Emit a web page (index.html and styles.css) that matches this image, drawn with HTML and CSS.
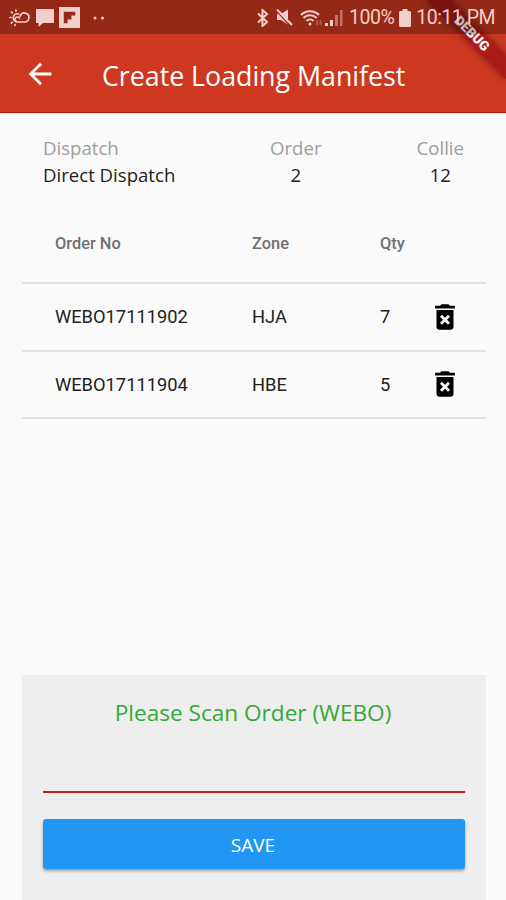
FILE: index.html
```html
<!DOCTYPE html>
<html lang="en">
<head>
    <meta charset="UTF-8">
    <meta name="viewport" content="width=device-width, initial-scale=1.0">
    <title>Create Loading Manifest</title>
    <link rel="stylesheet" href="styles.css">
</head>
<body>
    <header class="app-bar">
        <svg class="back" viewBox="0 0 24 24" fill="currentColor">
            <path d="M20 11H7.830l5.590-5.590L12 4l-8 8 8 8 1.410-1.410L7.830 13H20v-2z"/>
        </svg>
        <h1>Create Loading Manifest</h1>
    </header>

    <div class="debug-banner">DEBUG</div>

    <div class="status-bar">
        <div class="notifications">
            <svg class="icon-weather" width="21" height="18" viewBox="0 0 21 18" fill="none" stroke="currentColor" stroke-width="1.7" stroke-linecap="round">
                <path d="M9.500 5A4 4 0 1 0 7 12.600M7 1v1M2.500 3l.8.8M.9 8.500h1M2.300 14l.9-.8M6 16.500v-1"/>
                <path d="M8.500 13h7a4.500 4.500 0 1 0-4.300-6M8.500 13a2.500 2.500 0 1 1 2-4"/>
            </svg>
            <svg class="icon-chat" width="18" height="18" viewBox="0 0 18 18" fill="currentColor">
                <path d="M0 0h18v14H7l-4.500 4V14H0z"/>
            </svg>
            <svg class="icon-board" width="21" height="21" viewBox="0 0 22 22">
                <path d="M0 0h22v22H0z" fill="currentColor"/>
                <path d="M5 5h12v4h-4v4H9v4H5z" fill="#952a1a"/>
            </svg>
            <svg class="icon-more" width="12" height="4" viewBox="0 0 12 4" fill="currentColor">
                <circle cx="2" cy="2" r="1.500"/>
                <circle cx="9.500" cy="2" r="1.500"/>
            </svg>
        </div>
        <div class="system">
            <svg class="icon-bluetooth" width="12" height="18" viewBox="0 0 12 18" fill="none" stroke="currentColor" stroke-width="2">
                <path d="M1 4.500l9 8.500-4.500 4V1L10 5l-9 8.500"/>
            </svg>
            <svg class="icon-mute" width="17" height="17" viewBox="0 0 17 17">
                <path d="M1 5h4l7-4.500v15L5 11H1z" fill="currentColor"/>
                <path d="M0 1.500L14.500 17" stroke="#952a1a" stroke-width="1.500"/>
                <path d="M1 .5L16 16" stroke="currentColor" stroke-width="2"/>
            </svg>
            <svg class="icon-wifi" width="23" height="18" viewBox="0 0 23 18" fill="none" stroke="currentColor" stroke-width="2">
                <path d="M1 6a12.500 12.500 0 0 1 18 0M3.500 9a9 9 0 0 1 13 0M6.500 12a5 5 0 0 1 7 0"/>
                <circle cx="10" cy="15" r="1.500" fill="currentColor" stroke="none"/>
                <path d="M17 11v5M20.500 11v5" stroke-opacity=".3"/>
            </svg>
            <svg class="icon-signal" width="18" height="18" viewBox="0 0 18 18" fill="currentColor">
                <path d="M0 14h3v3H0zM5 11h3v6H5z"/>
                <path d="M10 6h3v11h-3zM15 1h2.500v16H15z" opacity=".45"/>
            </svg>
            <span class="battery-level">100%</span>
            <svg class="icon-battery" width="12" height="18" viewBox="0 0 12 18" fill="currentColor">
                <path d="M3.500 0h5v2H11l1 1v14l-1 1H1l-1-1V3l1-1h2.500z"/>
            </svg>
            <span class="clock">10:11 PM</span>
        </div>
    </div>

    <main>
        <div class="summary">
            <div class="summary-item dispatch">
                <span class="label">Dispatch</span>
                <span class="value">Direct Dispatch</span>
            </div>
            <div class="summary-item order">
                <span class="label">Order</span>
                <span class="value">2</span>
            </div>
            <div class="summary-item collie">
                <span class="label">Collie</span>
                <span class="value">12</span>
            </div>
        </div>

        <table class="orders">
            <thead>
                <tr>
                    <th class="col-order">Order No</th>
                    <th class="col-zone">Zone</th>
                    <th class="col-qty">Qty</th>
                    <th class="col-delete"></th>
                </tr>
            </thead>
            <tbody>
                <tr>
                    <td class="col-order">WEBO17111902</td>
                    <td>HJA</td>
                    <td>7</td>
                    <td>
                        <svg class="delete" viewBox="0 0 24 24" fill="currentColor">
                            <path d="M6 19c0 1.100.9 2 2 2h8c1.100 0 2-.9 2-2V7H6v12zm2.460-7.120l1.410-1.410L12 12.590l2.120-2.120 1.410 1.410L13.410 14l2.120 2.120-1.410 1.410L12 15.410l-2.120 2.120-1.410-1.410L10.590 14l-2.130-2.120zM15.500 4l-1-1h-5l-1 1H5v2h14V4z"/>
                        </svg>
                    </td>
                </tr>
                <tr>
                    <td class="col-order">WEBO17111904</td>
                    <td>HBE</td>
                    <td>5</td>
                    <td>
                        <svg class="delete" viewBox="0 0 24 24" fill="currentColor">
                            <path d="M6 19c0 1.100.9 2 2 2h8c1.100 0 2-.9 2-2V7H6v12zm2.460-7.120l1.410-1.410L12 12.590l2.120-2.120 1.410 1.410L13.410 14l2.120 2.120-1.410 1.410L12 15.410l-2.120 2.120-1.410-1.410L10.590 14l-2.130-2.120zM15.500 4l-1-1h-5l-1 1H5v2h14V4z"/>
                        </svg>
                    </td>
                </tr>
            </tbody>
        </table>

        <div class="scan-panel">
            <h2>Please Scan Order (WEBO)</h2>
            <input class="scan-input" type="text" aria-label="Order number">
            <button class="save">SAVE</button>
        </div>
    </main>
</body>
</html>
```
FILE: styles.css
```css
/* General Styles */
* {
    box-sizing: border-box;
}

body {
    position: relative;
    display: flex;
    flex-direction: column;
    height: 900px;
    margin: 0;
    overflow: hidden;
    background: #fafafa;
    color: #222;
    font-family: "Open Sans", "Noto Sans", sans-serif;
}

svg {
    display: block;
    flex: none;
}

/* Status bar, translucent over the app bar */
.status-bar {
    position: absolute;
    top: 0;
    left: 0;
    right: 0;
    display: flex;
    justify-content: space-between;
    height: 34px;
    padding: 0 11px 0 9px;
    background: rgba(0, 0, 0, 0.28);
    color: #f3cfca;
    font-family: Roboto, sans-serif;
    font-size: 19.5px;
    letter-spacing: -0.5px;
}

.notifications,
.system {
    display: flex;
    align-items: center;
    height: 35px;
}

.icon-chat {
    margin-left: 6px;
}

.icon-board {
    margin-left: 5px;
}

.icon-more {
    margin-left: 13px;
}

.icon-mute {
    margin-left: 7px;
}

.icon-wifi {
    margin-left: 7px;
}

.icon-signal {
    margin-left: 2px;
}

.battery-level {
    margin-left: 6px;
}

.icon-battery {
    margin: 0 5px 0 5px;
}

/* App bar */
.app-bar {
    display: flex;
    align-items: center;
    height: 113px;
    padding: 34px 0 0 23px;
    background: #cf3820;
    border-bottom: 1px solid #c01508;
    color: #fff;
}

.back {
    width: 34px;
    height: 34px;
    margin-top: 1px;
}

.app-bar h1 {
    margin: 5px 0 0 45px;
    font-size: 26.8px;
    font-weight: 400;
    letter-spacing: -0.03px;
    white-space: nowrap;
}

.debug-banner {
    position: absolute;
    top: 25px;
    left: 416px;
    width: 112px;
    height: 17px;
    background: rgba(155, 16, 22, 0.7);
    box-shadow: 0 0 8px rgba(0, 0, 0, 0.4);
    color: #fff;
    font: 900 13.5px/17px Roboto, sans-serif;
    text-align: center;
    transform: rotate(45deg);
}

/* Content */
main {
    display: flex;
    flex: 1;
    flex-direction: column;
    padding: 0 20px 0 22px;
}

.summary {
    display: flex;
    justify-content: space-between;
    padding: 21px 22px 0 21px;
}

.summary-item {
    display: flex;
    flex-direction: column;
    align-items: center;
    font-size: 18.6px;
    line-height: 27px;
    white-space: nowrap;
}

.summary-item.dispatch {
    align-items: flex-start;
    width: 132px;
}

.label {
    color: #9e9e9e;
}

.orders {
    width: 464px;
    margin-top: 17px;
    border-spacing: 0;
    table-layout: fixed;
    font-family: Roboto, sans-serif;
}

.orders th,
.orders td {
    padding: 0;
    border-bottom: 2px solid #e3e3e3;
    text-align: left;
    font-weight: 400;
}

.orders th {
    height: 79px;
    color: #707070;
    font-size: 16.4px;
    font-weight: 500;
}

.orders td {
    height: 67.5px;
    font-size: 18.3px;
}

.orders .col-order {
    width: 230px;
    padding-left: 33px;
}

.col-zone {
    width: 128px;
}

.col-qty {
    width: 48px;
}

.delete {
    width: 34px;
    height: 34px;
    color: #000;
}

/* Scan panel */
.scan-panel {
    display: flex;
    flex-direction: column;
    height: 225px;
    margin-top: auto;
    padding: 22px 21px 0;
    background: #eee;
}

.scan-panel h2 {
    margin: 0 2px 0 0;
    color: #35a83b;
    font-size: 22.6px;
    font-weight: 400;
    line-height: 32px;
    text-align: center;
    white-space: nowrap;
}

.scan-input {
    height: 64px;
    padding: 0;
    border: 0;
    border-bottom: 2px solid #cb1a14;
    background: none;
    font-size: 20px;
}

.save {
    height: 50px;
    margin-top: 26px;
    padding: 2px 2px 0 0;
    border: 0;
    border-radius: 3px;
    background: #2196f3;
    box-shadow: 0 2px 3px rgba(0, 0, 0, 0.35);
    color: #fff;
    font-family: inherit;
    font-size: 19px;
    font-weight: 500;
}
```
